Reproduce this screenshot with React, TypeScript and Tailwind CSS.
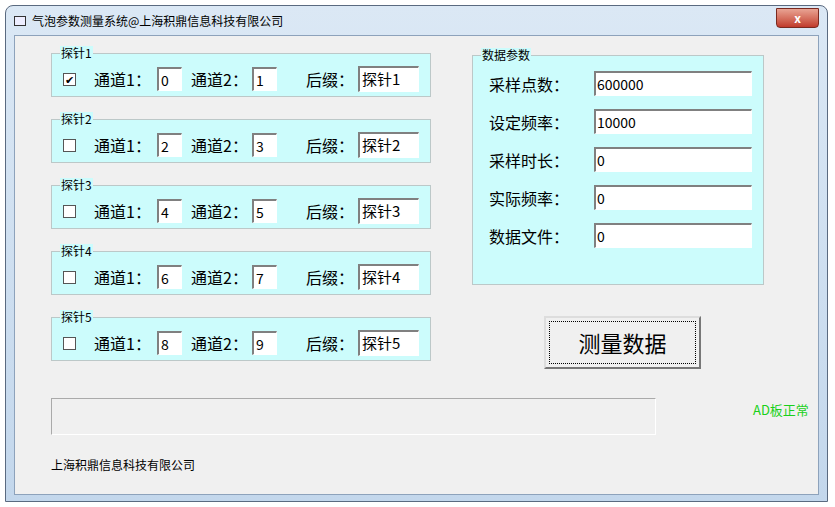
import React from "react";

const font = { fontFamily: '"Noto Sans CJK SC",sans-serif' };

function Probe({ n, a, b, checked }: { n: number; a: string; b: string; checked?: boolean }) {
  return (
    <div className="relative h-[44px] w-[380px] border border-[#bcc8c8] bg-[#ccfcfc]">
      <span className="absolute left-[8px] top-[-8px] bg-[#ccfcfc] px-[1px] text-[12px] leading-[14px] text-black">探针{n}</span>
      <div className="flex h-full items-center pt-[8px] text-[16px] text-black">
        <div className="ml-[11px] flex h-[13px] w-[13px] items-center justify-center border border-[#555] bg-white text-[11px] leading-none">
          {checked ? "✔" : ""}
        </div>
        <span className="ml-[18px] w-[63px]">通道1：</span>
        <div className="h-[24px] w-[25px] border-l-2 border-t-2 border-[#808080] border-b border-r border-b-white border-r-white bg-white pl-[2px] text-[14px] leading-[22px]">{a}</div>
        <span className="ml-[9px] w-[61px]">通道2：</span>
        <div className="h-[24px] w-[25px] border-l-2 border-t-2 border-[#808080] border-b border-r border-b-white border-r-white bg-white pl-[2px] text-[14px] leading-[22px]">{b}</div>
        <span className="ml-[29px] w-[52px]">后缀：</span>
        <div className="h-[26px] w-[61px] border-l-2 border-t-2 border-[#808080] border-b border-r border-b-white border-r-white bg-white pl-[2px] text-[15px] leading-[22px]">探针{n}</div>
      </div>
    </div>
  );
}

function Field({ label, value }: { label: string; value: string }) {
  return (
    <div className="flex items-center">
      <span className="w-[105px] text-[16px]">{label}</span>
      <div className="h-[25px] w-[158px] border-l-2 border-t-2 border-[#808080] border-b border-r border-b-white border-r-white bg-white pl-[1px] text-[14px] leading-[22px]">{value}</div>
    </div>
  );
}

export default function App() {
  return (
    <div className="h-[507px] w-[835px] bg-white p-[5px] pr-[7px]" style={font}>
      <div className="flex h-[497px] flex-col rounded-t-[8px] border border-[#5a6a80] bg-gradient-to-b from-[#dbe8f5] to-[#c3d7ec] px-[8px] pb-[6px]">
        <div className="flex h-[29px] items-center">
          <span className="mr-[6px] inline-block h-[10px] w-[12px] border border-[#333] bg-[#eef]"></span>
          <span className="text-[12px] text-black">气泡参数测量系统@上海积鼎信息科技有限公司</span>
          <div className="ml-auto mt-[-6px] flex h-[20px] w-[43px] items-center justify-center rounded-b-[4px] border border-[#7a2a20] bg-gradient-to-b from-[#e8a393] to-[#c0392b] text-[12px] font-bold text-white">x</div>
        </div>
        <div className="relative flex-1 border border-[#8da2bb] bg-[#f0f0f0] text-black">
          <div className="flex">
            <div className="ml-[36px] mt-[17px] flex flex-col gap-[22px]">
              <Probe n={1} a="0" b="1" checked />
              <Probe n={2} a="2" b="3" />
              <Probe n={3} a="4" b="5" />
              <Probe n={4} a="6" b="7" />
              <Probe n={5} a="8" b="9" />
            </div>
            <div className="ml-[41px] mt-[19px] flex flex-col">
              <div className="relative h-[230px] w-[292px] border border-[#bcc8c8] bg-[#ccfcfc]">
                <span className="absolute left-[8px] top-[-8px] bg-[#ccfcfc] px-[1px] text-[12px] leading-[14px]">数据参数</span>
                <div className="ml-[16px] mt-[15px] flex flex-col gap-[13px]">
                  <Field label="采样点数：" value="600000" />
                  <Field label="设定频率：" value="10000" />
                  <Field label="采样时长：" value="0" />
                  <Field label="实际频率：" value="0" />
                  <Field label="数据文件：" value="0" />
                </div>
              </div>
              <div className="ml-[72px] mt-[31px] flex h-[53px] w-[157px] items-center justify-center border-2 border-[#777] border-l-[#ddd] border-t-[#ddd] bg-[#f0f0f0] p-[3px]">
                <div className="flex h-full w-full items-center justify-center border border-dotted border-black text-[22px]">测量数据</div>
              </div>
            </div>
          </div>
          <div className="mt-[29px] flex items-center">
            <div className="ml-[36px] h-[37px] w-[605px] border border-[#aaa] border-b-white border-r-white bg-[#f0f0f0]"></div>
            <span className="ml-[97px] mb-[14px] text-[13px] text-[#19d019]">AD板正常</span>
          </div>
          <div className="ml-[36px] mt-[21px] text-[12px]">上海积鼎信息科技有限公司</div>
        </div>
      </div>
    </div>
  );
}
